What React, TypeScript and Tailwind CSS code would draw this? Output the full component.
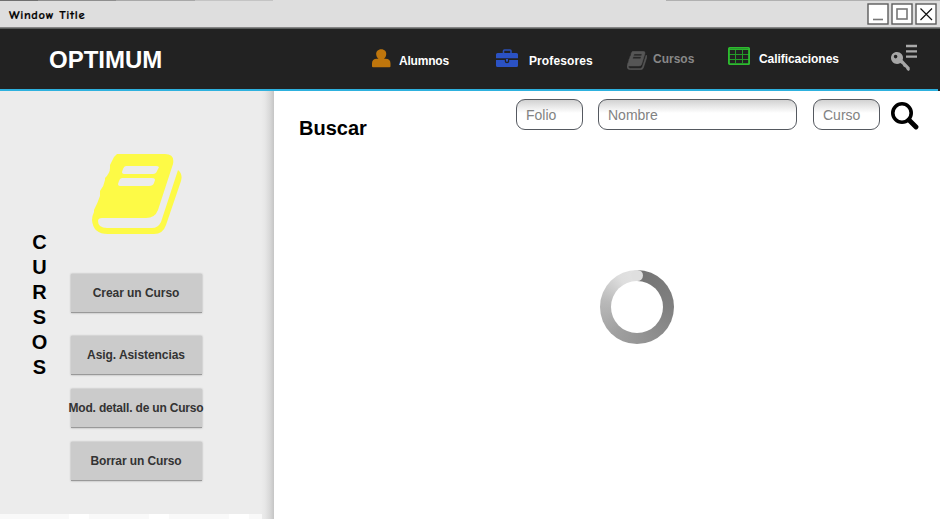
import type { ReactNode } from "react";

const SANS = "font-['Liberation_Sans',Arial,sans-serif]";

function BookIcon({ className }: { className: string }) {
  return (
    <svg viewBox="0 0 90 82" preserveAspectRatio="none" className={className} fill="currentColor">
      <path
        fillRule="evenodd"
        d="M25 1H73Q83 1 81 11L66 57Q63 65 54 65H10Q6 65 6 68Q6 75 15 75H60Q66 75 69 69L86 17Q91 21 89 28L74 72Q71 81 62 81H16Q1 81 0 67Q0 63 2 59V57Q6 49 8 43V38Q12 33 13 27V25Q18 20 18 15V12Q20 8 22 4ZM34 13Q32 13 31 16L30 19Q30 21 32 21H61Q64 21 65 18L67 14Q66 13 64 13ZM30 25Q28 25 27 28L26 31Q26 33 28 33H57Q61 33 62 30L63 27Q63 25 60 25Z"
      />
    </svg>
  );
}

function UserIcon() {
  return (
    <svg viewBox="0 0 19 19" className="ml-[210px] mt-[20px] h-[19px] w-[19px] shrink-0" fill="#bf760c">
      <path d="M9.200 .2C12.600 .2 14.600 2.500 14.200 5.500C14 7.800 12.900 9 12 9.800H13.500C17 9.800 18.500 11.500 18.500 14.500V17.300Q18.500 18.300 17.500 18.300H1Q0 18.300 0 17.300V14.500C0 11.500 1.500 9.800 5 9.800H6.500C5.500 9 4.400 7.800 4.200 5.500C3.900 2.500 6 .2 9.200 .2Z" />
    </svg>
  );
}

function BriefcaseIcon() {
  return (
    <svg viewBox="0 0 22 19" className="ml-[47px] mt-[20px] h-[19px] w-[22px] shrink-0">
      <path d="M7.500 5V2Q7.500 1 8.500 1H14Q15 1 15 2V5" fill="none" stroke="#2b4fb5" strokeWidth="1.600" />
      <path
        d="M1.500 4H20.500Q22 4 22 5.500V9.300H0V5.500Q0 4 1.500 4ZM0 11H8.800V12.500Q8.800 14.200 11 14.200Q13.200 14.200 13.200 12.500V11H22V16.500Q22 18 20.500 18H1.500Q0 18 0 16.500Z"
        fill="#2b52c4"
      />
      <path d="M10 10V12.300Q11 13.400 12 12.300V10Z" fill="#2b52c4" />
    </svg>
  );
}

function TableIcon() {
  return (
    <svg viewBox="0 0 22 18" className="ml-[34px] mt-[18px] h-[18px] w-[22px] shrink-0" fill="none">
      <path d="M7.500 2V16M14.500 2V16M1 7.500H21M1 12.500H21" stroke="#249a28" />
      <path d="M1 2.500H21" stroke="#2bb52e" />
      <rect x=".9" y=".9" width="20.200" height="16.200" rx="1" stroke="#2dbc2f" strokeWidth="1.900" />
    </svg>
  );
}

function KeyMenuIcon() {
  return (
    <svg viewBox="0 0 28 28" className="ml-[51px] mt-[15px] h-[28px] w-[28px] shrink-0">
      <path d="M15 2H26M15 7.300H26M15 12.600H26" stroke="#aaa" strokeWidth="2.300" />
      <path
        fillRule="evenodd"
        fill="#a6a6a6"
        d="M6 8C9.600 8 12.500 11 12 14.500L11.600 16L18.700 23.500V26L17.500 27L16 26L14.800 23.800L12.600 22.500L11.500 20.500L9.300 19C5 21.500 0 18.500 0 14C0 10.600 2.500 8 6 8ZM4.600 10.800A1.800 1.800 0 1 0 4.600 14.400A1.800 1.800 0 1 0 4.600 10.800Z"
      />
    </svg>
  );
}

function NavText({ children, className }: { children: ReactNode; className: string }) {
  return <span className={`shrink-0 whitespace-nowrap text-[12px] font-bold leading-[14px] ${className}`}>{children}</span>;
}

function TitleBar() {
  return (
    <div className="flex h-[27px] shrink-0 flex-col bg-[#dedede]">
      <div className="flex h-px">
        <div className="w-[38px] bg-[#707070]" />
        <div className="w-[78px] bg-[#8e8e8e]" />
        <div className="w-[79px] bg-[#a8a8a8]" />
        <div className="w-[78px] bg-[#c4c4c4]" />
        <div className="w-[393px] bg-[#dedede]" />
        <div className="flex-1 bg-[#b0b0b0]" />
      </div>
      <div className="flex items-start">
        <span className="ml-[9px] mt-[5px] flex-1 whitespace-nowrap font-['Comic_Neue','Lato',sans-serif] text-[12.5px] font-bold leading-[18px] tracking-[0.65px] text-black [-webkit-text-stroke:0.2px_black]">
          Window Title
        </span>
        <svg viewBox="0 0 74 22" className="mr-[-1px] mt-[2px] h-[22px] w-[74px]" fill="none">
          <g fill="#fff" stroke="#5c5c5c" strokeWidth="1.400">
            <rect x="1" y="1" width="20" height="20" />
            <rect x="25" y="1" width="20" height="20" />
            <rect x="49" y="1" width="20" height="20" />
          </g>
          <path d="M6 16.500H16" stroke="#777" strokeWidth="1.600" />
          <rect x="30" y="6" width="10" height="10" stroke="#777" strokeWidth="1.600" />
          <path d="M53.500 5.500L65 17M65 5.500L53.500 17" stroke="#111" strokeWidth="1.200" />
        </svg>
      </div>
    </div>
  );
}

function SideButton({ label, className }: { label: string; className: string }) {
  return (
    <button
      className={`flex h-[39px] w-[131px] shrink-0 items-center justify-center whitespace-nowrap border-b border-[#999] bg-[#cbcbcb] text-[12px] font-bold leading-[14px] text-[#333] shadow-[0_0_2px_rgba(0,0,0,0.3)] ${className}`}
    >
      {label}
    </button>
  );
}

function Field({ label, className }: { label: string; className: string }) {
  return (
    <input
      placeholder={label}
      className={`h-[31px] shrink-0 rounded-[9px] border border-[#555960] bg-linear-to-b from-[#d2d2d2] to-white to-45% px-[9px] text-[14px] leading-[16px] placeholder:text-[#828282] placeholder:opacity-100 ${className}`}
    />
  );
}

function Spinner() {
  return (
    <div className="ml-[326px] mt-[140px] flex h-[74px] w-[74px] items-center justify-center rounded-full bg-[conic-gradient(#747474_0deg,#808080_90deg,#919191_160deg,#a0a0a0_220deg,#b9b9b9_280deg,#dedede_330deg,#e2e2e2_360deg)]">
      <div className="relative h-[52px] w-[52px] rounded-full bg-white">
        <div className="absolute left-[20px] top-[-11px] h-[11px] w-[12px] rounded-full bg-[#dfdfdf]" />
      </div>
    </div>
  );
}

export default function App() {
  return (
    <div className={`flex h-[519px] w-[940px] flex-col overflow-hidden bg-white ${SANS}`}>
      <TitleBar />
      <div className="h-[2px] shrink-0 border-b border-[#5a5d5b] bg-[#858585]" />
      <header className="flex h-[60px] shrink-0 items-start bg-[#222] text-white">
        <div className="ml-[49px] mt-[17px] w-[113px] shrink-0 text-[24px] font-bold leading-[28px]">OPTIMUM</div>
        <UserIcon />
        <NavText className="ml-[8px] mt-[25px] w-[50px] tracking-[-0.2px]">Alumnos</NavText>
        <BriefcaseIcon />
        <NavText className="ml-[11px] mt-[25px] w-[65px] tracking-[0.1px]">Profesores</NavText>
        <BookIcon className="ml-[33px] mt-[22px] h-[19px] w-[20px] shrink-0 stroke-[#565656] stroke-2 text-[#565656]" />
        <NavText className="ml-[6px] mt-[23px] w-[41px] text-[#888]">Cursos</NavText>
        <TableIcon />
        <NavText className="ml-[9px] mt-[23px] w-[81px] tracking-[-0.06px]">Calificaciones</NavText>
        <KeyMenuIcon />
      </header>
      <div className="flex h-[2px] shrink-0 bg-[#222]">
        <div className="w-[938px] bg-[#2eb1de]" />
      </div>
      <div className="flex min-h-0 flex-1">
        <aside className="flex w-[274px] shrink-0 flex-col bg-[linear-gradient(to_right,#ececec_261px,#e7e7e7_265px,#d8d8d8_270px,#c5c5c5_274px)]">
          <div className="flex h-[423px]">
            <div className="ml-[32px] mt-[139px] flex w-[15px] flex-col items-center text-[20px] font-bold leading-[25px] text-black">
              {"CURSOS".split("").map((letter, i) => (
                <span key={i}>{letter}</span>
              ))}
            </div>
            <div className="ml-[24px] flex w-[131px] flex-col">
              <BookIcon className="ml-[21px] mt-[62px] h-[82px] w-[90px] shrink-0 text-[#fdfa46]" />
              <SideButton label="Crear un Curso" className="mt-[39px] pr-px tracking-[-0.05px]" />
              <SideButton label="Asig. Asistencias" className="mt-[23px] pr-px tracking-[-0.06px]" />
              <SideButton label="Mod. detall. de un Curso" className="mt-[14px] pr-px tracking-[-0.18px]" />
              <SideButton label="Borrar un Curso" className="mt-[14px] pr-px tracking-[-0.1px]" />
            </div>
          </div>
          <div className="h-[5px] w-[262px] bg-[linear-gradient(to_right,#f9f9f9_69px,#fff_69px,#fff_89px,#f9f9f9_89px,#f9f9f9_149px,#fff_149px,#fff_169px,#f9f9f9_169px,#f9f9f9_229px,#fff_229px,#fff_249px,#f9f9f9_249px)]" />
        </aside>
        <main className="flex flex-1 flex-col">
          <div className="flex h-[39px] items-start">
            <h1 className="ml-[25px] mt-[26px] w-[68px] shrink-0 text-[20px] font-bold leading-[23px] text-black">Buscar</h1>
            <Field label="Folio" className="ml-[149px] mt-[8px] w-[67px]" />
            <Field label="Nombre" className="ml-[15px] mt-[8px] w-[199px]" />
            <Field label="Curso" className="ml-[16px] mt-[8px] w-[67px]" />
            <svg viewBox="0 0 28 29" className="ml-[11px] mt-[10px] h-[29px] w-[28px] shrink-0" fill="none" stroke="#000">
              <circle cx="11" cy="12" r="9.200" strokeWidth="3.600" />
              <path d="M18 19L25 26" strokeWidth="4.800" strokeLinecap="round" />
            </svg>
          </div>
          <Spinner />
        </main>
      </div>
    </div>
  );
}
